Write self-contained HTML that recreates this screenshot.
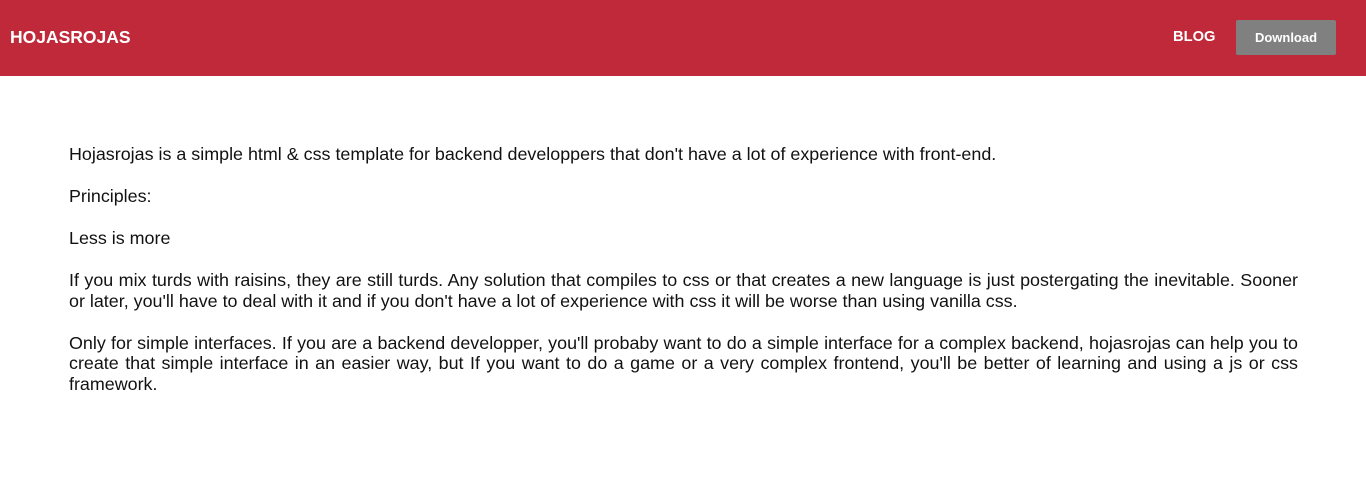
<!DOCTYPE html>
<html><head><style>
body{margin:0;font-family:"Liberation Sans",Arial,sans-serif;background:#fff;}
.hd{height:76px;background:#c0293a;position:relative;}
.logo{position:absolute;left:10px;top:27px;color:#fff;font-weight:bold;font-size:17.5px;}
.blog{position:absolute;left:1173px;top:29px;color:#fff;font-weight:bold;font-size:14.7px;}
.dl{position:absolute;left:1236px;top:20px;width:100px;height:35px;background:#808080;border-radius:2px;color:#fff;font-weight:bold;font-size:13px;text-align:center;line-height:35px;}
.c{position:absolute;left:69px;top:144px;width:1229px;font-size:17.9px;line-height:20.5px;color:#111;text-align:justify;}
.c p{margin:0 0 21.5px;}
</style></head><body>
<div class="hd"><div class="logo">HOJASROJAS</div><div class="blog">BLOG</div><div class="dl">Download</div></div>
<div class="c">
<p>Hojasrojas is a simple html &amp; css template for backend developpers that don't have a lot of experience with front-end.</p>
<p>Principles:</p>
<p>Less is more</p>
<p>If you mix turds with raisins, they are still turds. Any solution that compiles to css or that creates a new language is just postergating the inevitable. Sooner or later, you'll have to deal with it and if you don't have a lot of experience with css it will be worse than using vanilla css.</p>
<p>Only for simple interfaces. If you are a backend developper, you'll probaby want to do a simple interface for a complex backend, hojasrojas can help you to create that simple interface in an easier way, but If you want to do a game or a very complex frontend, you'll be better of learning and using a js or css framework.</p>
</div>
</body></html>
